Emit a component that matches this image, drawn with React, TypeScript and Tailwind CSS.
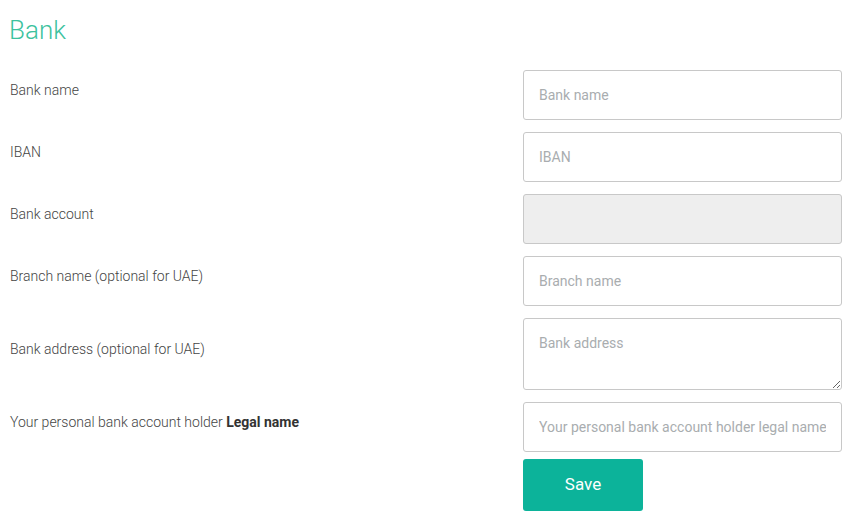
import React from 'react';

const Row: React.FC<{ label: React.ReactNode; children: React.ReactNode }> = ({ label, children }) => {
    return (
        <div className="flex items-center">
            <div className="flex-1 pl-px pb-[10px] text-[14px] text-[#444] font-light">{label}</div>
            <div className="w-[319px]">{children}</div>
        </div>
    );
};

const inputBase =
    "w-full h-[50px] rounded-[3px] border border-[#c8c8c8] px-[15px] text-[14px] text-[#333] placeholder:text-[#a9adaf] outline-none";

export default function App() {
    return (
        <div className="w-[861px] h-[530px] bg-white pl-[9px] pr-[19px] pt-[13px]" style={{ fontFamily: 'Roboto, "Noto Sans", sans-serif' }}>
            <h1 className="text-[26px] font-light text-[#3cc29e] leading-[34px]">Bank</h1>
            <div className="mt-[23px] flex flex-col gap-[12px]">
                <Row label="Bank name">
                    <input className={inputBase + " bg-white"} placeholder="Bank name" />
                </Row>
                <Row label="IBAN">
                    <input className={inputBase + " bg-white"} placeholder="IBAN" />
                </Row>
                <Row label="Bank account">
                    <input className={inputBase + " bg-[#eeeeee]"} disabled />
                </Row>
                <Row label="Branch name (optional for UAE)">
                    <input className={inputBase + " bg-white"} placeholder="Branch name" />
                </Row>
                <Row label="Bank address (optional for UAE)">
                    <textarea
                        className="block w-full h-[72px] rounded-[3px] border border-[#c8c8c8] bg-white px-[15px] py-[14px] text-[14px] leading-[20px] text-[#333] placeholder:text-[#a9adaf] outline-none"
                        placeholder="Bank address"
                    />
                </Row>
                <Row label={<>Your personal bank account holder <b className="font-bold text-[#333]">Legal name</b></>}>
                    <input className={inputBase + " bg-white"} placeholder="Your personal bank account holder legal name" />
                </Row>
            </div>
            <div className="flex justify-end pr-[199px] mt-[7px]">
                <button className="w-[120px] h-[52px] rounded-[3px] bg-[#0cb39a] text-white text-[17px]">Save</button>
            </div>
        </div>
    );
}
